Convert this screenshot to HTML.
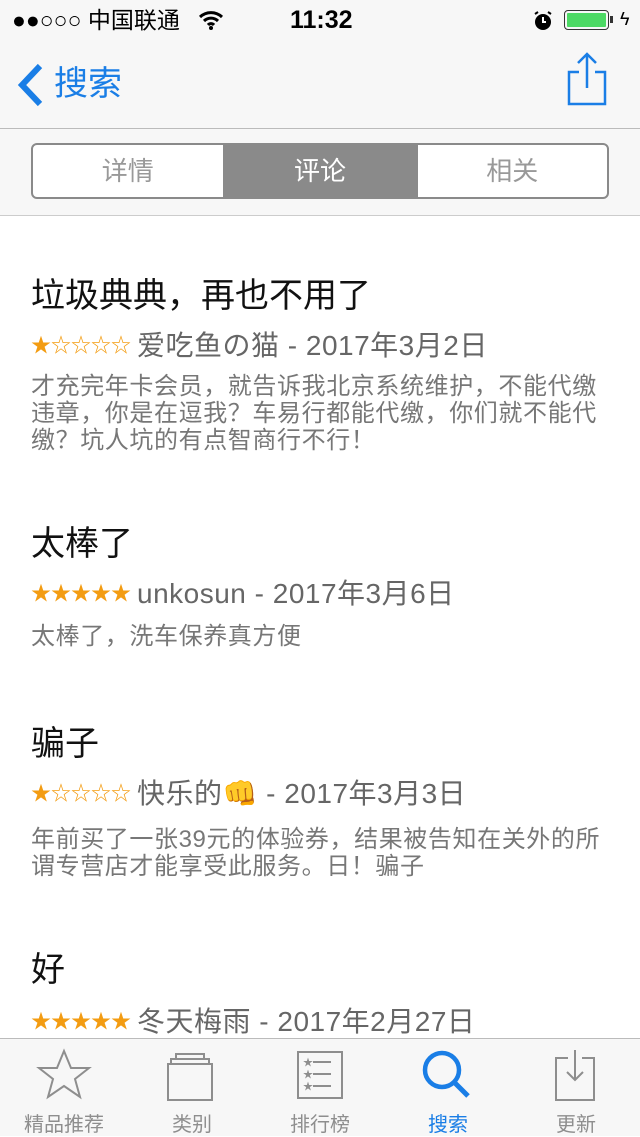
<!DOCTYPE html>
<html><head><meta charset="utf-8"><style>
*{margin:0;padding:0;box-sizing:border-box}
body{width:640px;height:1136px;overflow:hidden;background:#fff;font-family:"Liberation Sans","Noto Sans CJK SC",sans-serif;position:relative}
.abs{position:absolute;white-space:nowrap}
.top{position:absolute;left:0;top:0;width:640px;height:215px;background:#f7f7f7}
.title{position:absolute;left:31px;font-size:34px;color:#111;line-height:40px}
.meta{position:absolute;left:31px;font-size:28px;color:#666;line-height:32px;display:flex;align-items:center;letter-spacing:0.5px}
.stars{color:#f39c12;font-size:20px;letter-spacing:0px;margin-right:8px;width:98px;white-space:nowrap}
.body{position:absolute;left:31px;width:580px;font-size:24px;letter-spacing:0.6px;color:#777;line-height:27px}
.tab{position:absolute;top:1038px;height:98px;width:128px;text-align:center}
.tab span{position:absolute;left:0;right:0;top:70px;font-size:20px;color:#8e8e8e}
</style></head><body>
<div class="top"></div>
<div class="abs" style="left:12px;top:5px;font-size:23px;color:#000;line-height:30px">●●○○○ 中国联通</div>
<svg class="abs" style="left:198px;top:10px" width="26" height="20" viewBox="0 0 26 20"><path d="M2 7a16 16 0 0 1 22 0M6 11a10 10 0 0 1 14 0M10 15a4 4 0 0 1 6 0" stroke="#000" stroke-width="3" fill="none"/><circle cx="13" cy="18" r="2"/></svg>
<div class="abs" style="left:290px;top:5px;font-size:25px;font-weight:bold;line-height:30px">11:32</div>
<svg class="abs" style="left:532px;top:10px" width="22" height="22" viewBox="0 0 22 22"><circle cx="11" cy="12" r="8" fill="#000"/><path d="M11 7v5h3" stroke="#fff" stroke-width="2" fill="none"/><path d="M3 4l3-2M19 4l-3-2" stroke="#000" stroke-width="2"/></svg>
<div class="abs" style="left:564px;top:10px;width:45px;height:20px;border:1.5px solid #333;border-radius:4px;padding:2px"><div style="background:#4cd964;width:100%;height:100%;border-radius:1px"></div></div>
<div class="abs" style="left:610px;top:16px;width:3px;height:7px;background:#333"></div>
<div class="abs" style="left:620px;top:9px;font-size:18px">ϟ</div>
<svg class="abs" style="left:14px;top:62px" width="30" height="46" viewBox="0 0 30 46"><path d="M26 4L8 23l18 19" stroke="#1a7ee6" stroke-width="6" fill="none"/></svg>
<div class="abs" style="left:54px;top:62px;font-size:34px;color:#1a7ee6;line-height:44px">搜索</div>
<svg class="abs" style="left:566px;top:50px" width="44" height="58" viewBox="0 0 44 58"><path d="M13 22H3v32h36V22H29M21 38V4M12 13l9-9 9 9" stroke="#1a7ee6" stroke-width="2.5" fill="none"/></svg>
<div class="abs" style="left:0;top:128px;width:640px;height:1px;background:#bbb"></div>
<div class="abs" style="left:31px;top:143px;width:578px;height:56px;border:2px solid #8a8a8a;border-radius:6px;overflow:hidden;background:#fff;display:flex;font-size:26px;color:#999;line-height:52px;text-align:center">
<div style="flex:1">详情</div><div style="width:195px;background:#8a8a8a;color:#fff">评论</div><div style="flex:1">相关</div></div>
<div class="abs" style="left:0;top:215px;width:640px;height:1px;background:#ccc"></div>

<div class="title" style="top:276px">垃圾典典，再也不用了</div>
<div class="meta" style="top:330px"><span class="stars">★☆☆☆☆</span>爱吃鱼の猫 - 2017年3月2日</div>
<div class="body" style="top:373px">才充完年卡会员，就告诉我北京系统维护，不能代缴违章，你是在逗我？车易行都能代缴，你们就不能代缴？坑人坑的有点智商行不行！</div>

<div class="title" style="top:524px">太棒了</div>
<div class="meta" style="top:578px"><span class="stars">★★★★★</span>unkosun - 2017年3月6日</div>
<div class="body" style="top:623px">太棒了，洗车保养真方便</div>

<div class="title" style="top:724px">骗子</div>
<div class="meta" style="top:778px"><span class="stars">★☆☆☆☆</span>快乐的👊 - 2017年3月3日</div>
<div class="body" style="top:826px">年前买了一张39元的体验券，结果被告知在关外的所谓专营店才能享受此服务。日！骗子</div>

<div class="title" style="top:950px">好</div>
<div class="meta" style="top:1006px"><span class="stars">★★★★★</span>冬天梅雨 - 2017年2月27日</div>

<div class="abs" style="left:0;top:1038px;width:640px;height:98px;background:#f7f7f7;border-top:1px solid #bbb"></div>
<div class="tab" style="left:0"><svg style="position:absolute;left:36px;top:10px" width="56" height="52" viewBox="0 0 56 52"><path d="M28 3l7 17h18l-14 11 5 18-16-11-16 11 5-18L3 20h18z" stroke="#8e8e8e" stroke-width="2" fill="none"/></svg><span>精品推荐</span></div>
<div class="tab" style="left:128px"><svg style="position:absolute;left:38px;top:12px" width="50" height="52" viewBox="0 0 50 52"><rect x="2" y="14" width="44" height="36" stroke="#8e8e8e" stroke-width="2" fill="none"/><path d="M5 14V9h38v5M10 9V4h28v5" stroke="#8e8e8e" stroke-width="2" fill="none"/></svg><span>类别</span></div>
<div class="tab" style="left:256px"><svg style="position:absolute;left:40px;top:12px" width="48" height="52" viewBox="0 0 48 52"><rect x="2" y="2" width="44" height="46" stroke="#8e8e8e" stroke-width="2" fill="none"/><path d="M17 12h18M17 24h18M17 36h18" stroke="#8e8e8e" stroke-width="2"/><text x="7" y="16" font-size="10" fill="#8e8e8e">★</text><text x="7" y="28" font-size="10" fill="#8e8e8e">★</text><text x="7" y="40" font-size="10" fill="#8e8e8e">★</text></svg><span>排行榜</span></div>
<div class="tab" style="left:384px"><svg style="position:absolute;left:36px;top:10px" width="56" height="56" viewBox="0 0 56 56"><circle cx="22" cy="22" r="17" stroke="#1a7ee6" stroke-width="4.5" fill="none"/><path d="M34 34l14 14" stroke="#1a7ee6" stroke-width="5"/></svg><span style="color:#1a7ee6">搜索</span></div>
<div class="tab" style="left:512px"><svg style="position:absolute;left:42px;top:10px" width="44" height="56" viewBox="0 0 44 56"><path d="M14 10H2v42h38V10H28M21 2v30M13 24l8 8 8-8" stroke="#8e8e8e" stroke-width="2" fill="none"/></svg><span>更新</span></div>
</body></html>
